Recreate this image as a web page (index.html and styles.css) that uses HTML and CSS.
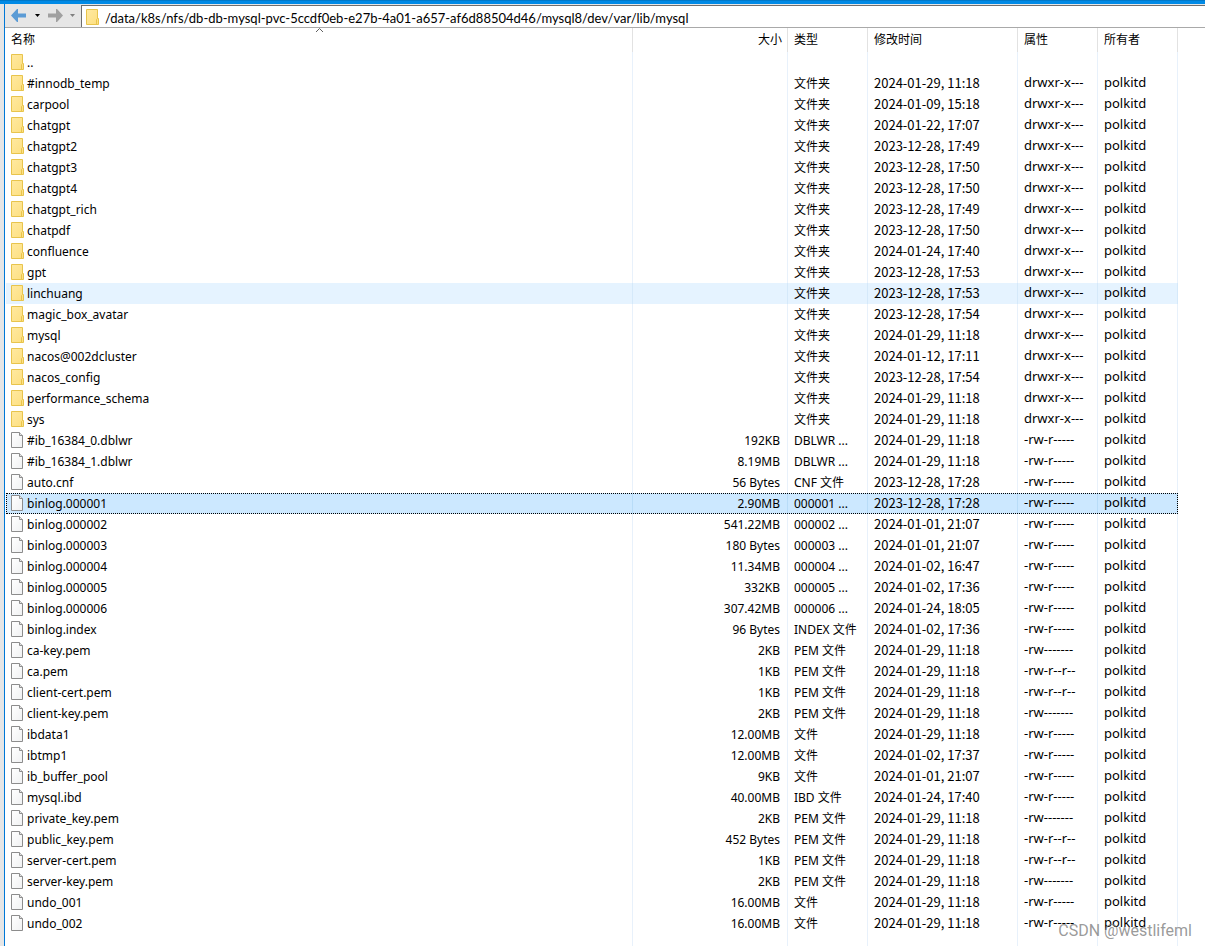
FILE: index.html
```
<!DOCTYPE html>
<html lang="zh-CN">
<head>
<meta charset="utf-8">
<title>mysql</title>
<link rel="stylesheet" href="styles.css">
</head>
<body>
<svg class="sprites" aria-hidden="true">
  <defs>
    <linearGradient id="gold" x1="0" y1="0" x2="1" y2="1"><stop offset="0" stop-color="#ffe9a0"/><stop offset="1" stop-color="#fddf80"/></linearGradient>
    <linearGradient id="paper" x1="0" y1="0" x2="1" y2="1"><stop offset="0" stop-color="#ffffff"/><stop offset="1" stop-color="#f0f1f2"/></linearGradient>
  </defs>
  <symbol id="folder" viewBox="0 0 13 16"><path d="M.5.5h11v9h1v6H.5z" fill="url(#gold)" stroke="#e8c44c"/><path d="M10.5 15.500v-5l1-1" fill="none" stroke="#e8c44c"/></symbol>
  <symbol id="file" viewBox="0 0 13 16"><path d="M.5.5h8l3 3v12H.5z" fill="url(#paper)" stroke="#8c8c8c"/><path d="M8.500.5v3h3" fill="#e4e4e4" stroke="#8c8c8c"/></symbol>
</svg>
<div class="titlebar"></div>
<div class="window">
  <header class="toolbar">
    <nav class="history">
      <button class="go back" aria-label="后退"><svg viewBox="0 0 15 13"><path d="M0 6.500 6 0h1v4.500h8v4H7V13H6z"/></svg></button>
      <button class="more" aria-label="后退历史"><svg viewBox="0 0 5 3"><path d="M0 0h5L2.500 3z"/></svg></button>
      <button class="go forward" aria-label="前进"><svg viewBox="0 0 15 13"><path d="M15 6.500 9 0H8v4.500H0v4h8V13h1z"/></svg></button>
      <button class="more dim" aria-label="前进历史"><svg viewBox="0 0 5 3"><path d="M0 0h5L2.500 3z"/></svg></button>
    </nav>
    <label class="address">
      <svg class="icon"><use href="#folder"/></svg>
      <input class="path" type="text" aria-label="路径" value="/data/k8s/nfs/db-db-mysql-pvc-5ccdf0eb-e27b-4a01-a657-af6d88504d46/mysql8/dev/var/lib/mysql">
    </label>
  </header>
  <main class="listing">
    <table class="files">
      <colgroup><col><col class="w-size"><col class="w-type"><col class="w-date"><col class="w-attr"><col class="w-owner"></colgroup>
      <thead><tr><th>名称<svg class="sort" viewBox="0 0 7 4"><path d="M0 4 3.500.5 7 4"/></svg></th><th class="size">大小</th><th>类型</th><th>修改时间</th><th>属性</th><th>所有者</th></tr></thead>
      <tbody id="rows"></tbody>
    </table>
  </main>
</div>
<div class="watermark">CSDN @westlifeml</div>
<script src="files.js"></script>
</body>
</html>
```
FILE: styles.css
```
* { box-sizing: border-box; }
body {
  margin: 0;
  height: 100vh;
  display: flex;
  flex-direction: column;
  overflow: hidden;
  background: #e6e6e6;
  color: #000;
  font: 12px/20px "Noto Sans", "Noto Sans CJK SC", sans-serif;
}
.sprites { position: absolute; width: 0; height: 0; }
.titlebar { flex: none; height: 4px; background: linear-gradient(#0078c8 1px, #008ae6 1px); }
.window {
  flex: 1;
  min-height: 0;
  display: flex;
  flex-direction: column;
  margin-left: 4px;
  border-left: 1px solid #0078d7;
  background: #fff;
}
.toolbar {
  flex: none;
  display: flex;
  height: 24px;
  padding-top: 1px;
  border-bottom: 1px solid #a9a9a9;
  background: #e6e6e6;
}
.history { display: flex; align-items: center; width: 76px; padding: 0 0 2px 6px; }
button { margin: 0; padding: 0; border: 0; background: none; display: flex; justify-content: center; }
.go svg { width: 15px; height: 13px; }
.back { fill: #5b9bd5; }
.forward { fill: #a0a0a0; }
.more { width: 23px; fill: #000; }
.more.dim { width: 18px; fill: #808080; }
.more svg { width: 5px; height: 3px; }
.address {
  flex: 1;
  display: flex;
  align-items: center;
  gap: 6px;
  padding-left: 4px;
  border: solid #6e6e6e;
  border-width: 1px 0 0 1px;
  background: #fff;
}
.icon { flex: none; width: 13px; height: 16px; }
.path {
  flex: 1;
  min-width: 0;
  height: 22px;
  padding: 2px 0 0;
  border: 0;
  outline: 0;
  background: none;
  color: #000;
  font: 13px/20px Lato, "Noto Sans", sans-serif;
}
.listing { flex: 1; min-height: 0; padding: 0 27px 0 1px; }
.files { width: 100%; height: 100%; table-layout: fixed; border-collapse: separate; border-spacing: 0; }
.w-size { width: 155px; }
.w-type { width: 80px; }
.w-date { width: 150px; }
.w-attr { width: 80px; }
.w-owner { width: 80px; }
th, td { padding: 0 0 0 6px; border-right: 1px solid #e8f1fb; text-align: left; white-space: nowrap; overflow: hidden; }
th { position: relative; height: 24px; border-color: #e2e2e2; font-weight: 400; }
th:first-child { padding-left: 5px; }
.sort { position: absolute; top: 0; left: 49.5%; width: 7px; height: 4px; fill: none; stroke: #606060; }
tbody tr { height: 21px; }
tbody tr.rest { height: auto; }
td:first-child { padding-left: 5px; }
.name { display: flex; align-items: center; gap: 3px; }
.name .icon { margin-bottom: 2px; }
.size { text-align: right; padding-right: 7px; }
.size:is(th) { padding-right: 5px; }
.date { font-family: "Noto Sans CJK SC", sans-serif; font-size: 13px; }
.date, .attr, .owner { font-size: 13px; line-height: 19px; padding-bottom: 2px; }
.hover td { background: #e5f3ff; border-color: #d5e9fa; }
.selected td { background: #cce8ff; border-color: #b8dcf8; }
.selected { outline: 1px dotted #000; outline-offset: -1px; }
.watermark {
  position: absolute;
  right: 13px;
  bottom: 5px;
  color: #808080cc;
  font: 16px/20px Roboto, sans-serif;
}
```
FILE: files.js
```
const FOLDER = "文件夹";
const folders = [
  ["#innodb_temp", "2024-01-29, 11:18"],
  ["carpool", "2024-01-09, 15:18"],
  ["chatgpt", "2024-01-22, 17:07"],
  ["chatgpt2", "2023-12-28, 17:49"],
  ["chatgpt3", "2023-12-28, 17:50"],
  ["chatgpt4", "2023-12-28, 17:50"],
  ["chatgpt_rich", "2023-12-28, 17:49"],
  ["chatpdf", "2023-12-28, 17:50"],
  ["confluence", "2024-01-24, 17:40"],
  ["gpt", "2023-12-28, 17:53"],
  ["linchuang", "2023-12-28, 17:53", "hover"],
  ["magic_box_avatar", "2023-12-28, 17:54"],
  ["mysql", "2024-01-29, 11:18"],
  ["nacos@002dcluster", "2024-01-12, 17:11"],
  ["nacos_config", "2023-12-28, 17:54"],
  ["performance_schema", "2024-01-29, 11:18"],
  ["sys", "2024-01-29, 11:18"],
];
const files = [
  ["#ib_16384_0.dblwr", "192KB", "DBLWR ...", "2024-01-29, 11:18", "-rw-r-----"],
  ["#ib_16384_1.dblwr", "8.19MB", "DBLWR ...", "2024-01-29, 11:18", "-rw-r-----"],
  ["auto.cnf", "56 Bytes", "CNF 文件", "2023-12-28, 17:28", "-rw-r-----"],
  ["binlog.000001", "2.90MB", "000001 ...", "2023-12-28, 17:28", "-rw-r-----", "selected"],
  ["binlog.000002", "541.22MB", "000002 ...", "2024-01-01, 21:07", "-rw-r-----"],
  ["binlog.000003", "180 Bytes", "000003 ...", "2024-01-01, 21:07", "-rw-r-----"],
  ["binlog.000004", "11.34MB", "000004 ...", "2024-01-02, 16:47", "-rw-r-----"],
  ["binlog.000005", "332KB", "000005 ...", "2024-01-02, 17:36", "-rw-r-----"],
  ["binlog.000006", "307.42MB", "000006 ...", "2024-01-24, 18:05", "-rw-r-----"],
  ["binlog.index", "96 Bytes", "INDEX 文件", "2024-01-02, 17:36", "-rw-r-----"],
  ["ca-key.pem", "2KB", "PEM 文件", "2024-01-29, 11:18", "-rw-------"],
  ["ca.pem", "1KB", "PEM 文件", "2024-01-29, 11:18", "-rw-r--r--"],
  ["client-cert.pem", "1KB", "PEM 文件", "2024-01-29, 11:18", "-rw-r--r--"],
  ["client-key.pem", "2KB", "PEM 文件", "2024-01-29, 11:18", "-rw-------"],
  ["ibdata1", "12.00MB", "文件", "2024-01-29, 11:18", "-rw-r-----"],
  ["ibtmp1", "12.00MB", "文件", "2024-01-02, 17:37", "-rw-r-----"],
  ["ib_buffer_pool", "9KB", "文件", "2024-01-01, 21:07", "-rw-r-----"],
  ["mysql.ibd", "40.00MB", "IBD 文件", "2024-01-24, 17:40", "-rw-r-----"],
  ["private_key.pem", "2KB", "PEM 文件", "2024-01-29, 11:18", "-rw-------"],
  ["public_key.pem", "452 Bytes", "PEM 文件", "2024-01-29, 11:18", "-rw-r--r--"],
  ["server-cert.pem", "1KB", "PEM 文件", "2024-01-29, 11:18", "-rw-r--r--"],
  ["server-key.pem", "2KB", "PEM 文件", "2024-01-29, 11:18", "-rw-------"],
  ["undo_001", "16.00MB", "文件", "2024-01-29, 11:18", "-rw-r-----"],
  ["undo_002", "16.00MB", "文件", "2024-01-29, 11:18", "-rw-r-----"],
];

function row(icon, name, size, type, date, attr, owner, state = "") {
  return `<tr class="${state}"><td><div class="name"><svg class="icon"><use href="#${icon}"/></svg>${name}</div></td>` +
    `<td class="size">${size}</td><td>${type}</td><td class="date">${date}</td>` +
    `<td class="attr">${attr}</td><td class="owner">${owner}</td></tr>`;
}

document.getElementById("rows").innerHTML = [
  row("folder", "..", "", "", "", "", ""),
  ...folders.map(([name, date, state]) => row("folder", name, "", FOLDER, date, "drwxr-x---", "polkitd", state)),
  ...files.map(([name, size, type, date, attr, state]) => row("file", name, size, type, date, attr, "polkitd", state)),
  '<tr class="rest">' + "<td></td>".repeat(6) + "</tr>",
].join("");
```
